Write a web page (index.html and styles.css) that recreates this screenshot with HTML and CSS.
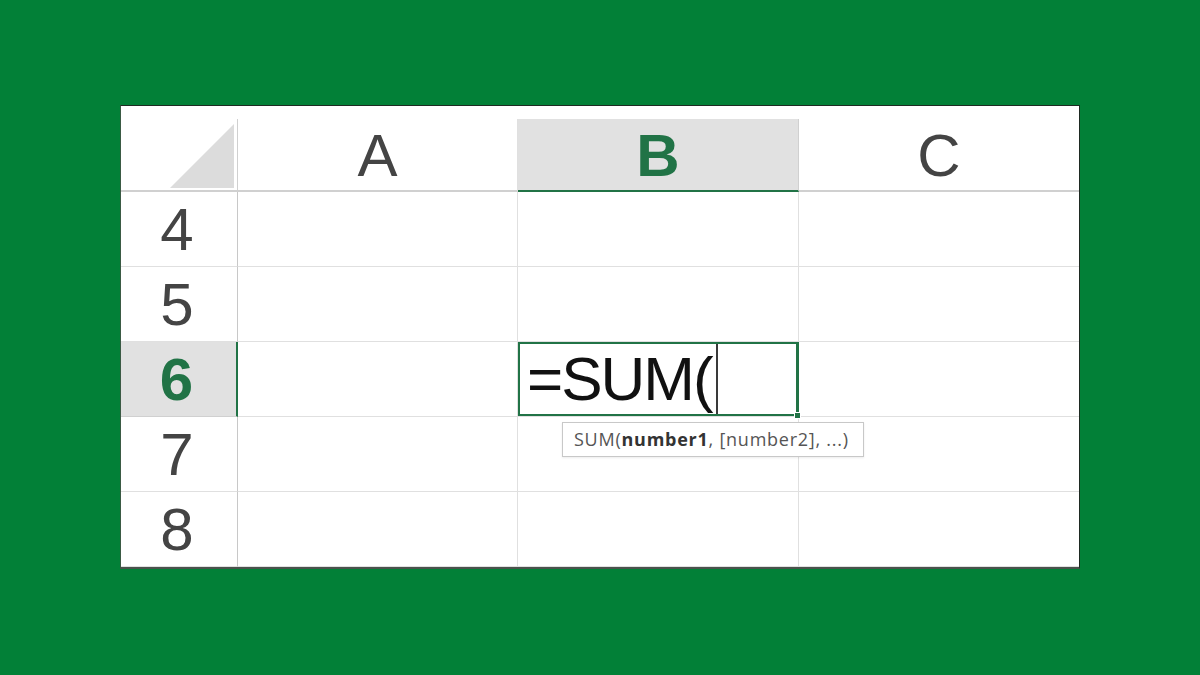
FILE: index.html
```html
<!DOCTYPE html>
<html>
<head>
<meta charset="utf-8">
<link rel="stylesheet" href="styles.css">
</head>
<body>
<div class="sheet">
  <div class="topstrip"></div>
  <div class="grid">
    <div class="cell corner">
      <svg width="66" height="66" viewBox="0 0 66 66"><polygon points="1,65 65,1 65,65" fill="#dcdcdc"/></svg>
    </div>
    <div class="cell colhead">A</div>
    <div class="cell colhead sel">B</div>
    <div class="cell colhead last">C</div>

    <div class="cell rowhead">4</div><div class="cell"></div><div class="cell"></div><div class="cell last"></div>
    <div class="cell rowhead">5</div><div class="cell"></div><div class="cell"></div><div class="cell last"></div>
    <div class="cell rowhead sel">6</div><div class="cell"></div>
    <div class="cell active">
      <span class="formula">=SUM(</span><span class="caret"></span>
      <span class="handle"></span>
      <div class="tooltip">SUM(<b>number1</b>, [number2], ...)</div>
    </div>
    <div class="cell last"></div>
    <div class="cell rowhead">7</div><div class="cell"></div><div class="cell"></div><div class="cell last"></div>
    <div class="cell rowhead">8</div><div class="cell"></div><div class="cell"></div><div class="cell last"></div>
  </div>
</div>
</body>
</html>
```

FILE: styles.css
```css
html, body {
  margin: 0;
  padding: 0;
  background: #028037;
  width: 1200px;
  height: 675px;
  overflow: hidden;
}
body {
  padding-top: 105px;
  box-sizing: border-box;
  font-family: "Liberation Sans", Arial, sans-serif;
}
.sheet {
  margin-left: 120px;
  width: 960px;
  height: 464px;
  box-sizing: border-box;
  background: #fff;
  border: 1px solid #1e2a22;
  border-left-color: #3a5a44;
  border-bottom: 2px solid #4a524c;
}
.topstrip {
  height: 13px;
}
.grid {
  display: grid;
  grid-template-columns: 117px 280px 281px 280px;
  grid-template-rows: 73px repeat(5, 75px);
}
.cell {
  box-sizing: border-box;
  border-right: 1px solid #e0e0e0;
  border-bottom: 1px solid #e0e0e0;
  position: relative;
}
.cell.last {
  border-right: none;
}
.corner {
  border-right: 1px solid #d0d0d0;
  border-bottom: 2px solid #d0d0d0;
  display: flex;
  align-items: flex-end;
  justify-content: flex-end;
  padding: 0 2px 1px 0;
}
.corner svg {
  display: block;
}
.colhead {
  border-bottom: 2px solid #d0d0d0;
  display: flex;
  align-items: center;
  justify-content: center;
  font-size: 60px;
  color: #444;
  padding-top: 2px;
}
.colhead.sel {
  background: #e1e1e1;
  border-bottom: 2px solid #217346;
  border-right-color: #d0d0d0;
  color: #217346;
  font-weight: bold;
}
.rowhead {
  border-right: 1px solid #c8c8c8;
  display: flex;
  align-items: center;
  justify-content: center;
  font-size: 60px;
  color: #444;
  padding-right: 4px;
}
.rowhead.sel {
  background: #e1e1e1;
  border-right: 2px solid #217346;
  border-bottom-color: #d0d0d0;
  color: #217346;
  font-weight: bold;
}
.active {
  box-shadow: inset 0 0 0 2px #217346;
  border-right-color: #217346;
  display: flex;
  align-items: center;
  padding-left: 9px;
  overflow: visible;
  z-index: 2;
}
.formula {
  font-size: 62px;
  color: #111;
  line-height: 1;
  letter-spacing: -2px;
}
.caret {
  align-self: stretch;
  width: 2px;
  background: #3a3a3a;
  margin: 2px 0 2px 4px;
}
.handle {
  position: absolute;
  right: -3px;
  bottom: -3px;
  width: 5px;
  height: 5px;
  background: #217346;
  border: 1px solid #fff;
}
.tooltip {
  position: absolute;
  left: 44px;
  top: 80px;
  width: 302px;
  height: 35px;
  box-sizing: border-box;
  background: #fff;
  border: 1px solid #c8c8c8;
  box-shadow: 0 1px 2px rgba(0,0,0,0.08);
  font-family: "Open Sans", "Noto Sans", sans-serif;
  font-size: 18px;
  letter-spacing: 0.75px;
  color: #555;
  padding-left: 11px;
  line-height: 32px;
  white-space: nowrap;
}
.tooltip b {
  color: #333;
  font-weight: bold;
}
```
